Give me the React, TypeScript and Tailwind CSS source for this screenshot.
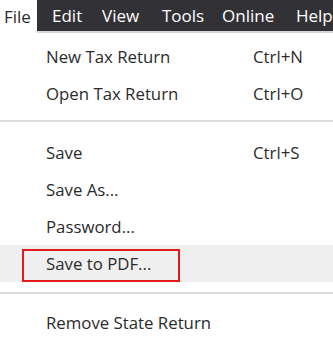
import React from 'react';

const tabs = [
  { name: 'File', w: 'w-[37px]' },
  { name: 'Edit', w: 'w-[50px]' },
  { name: 'View', w: 'w-[60px]' },
  { name: 'Tools', w: 'w-[60px]' },
  { name: 'Online', w: 'w-[74px]' },
  { name: 'Help', w: 'w-[52px]' },
];

const Row: React.FC<{ label: string; shortcut?: string; active?: boolean }> = ({ label, shortcut, active }) => (
  <div className={`relative flex items-center h-[37px] pl-[46px] ${active ? 'bg-[#efefef]' : ''}`}>
    <span className="flex-1">{label}</span>
    {shortcut && <span className="w-[80px]">{shortcut}</span>}
    {active && (
      <div className="absolute left-[22px] top-[4px] w-[158px] h-[33px] border-2 border-[#e3191c]" />
    )}
  </div>
);

const App: React.FC = () => {
  return (
    <div className="w-[333px] h-[342px] overflow-hidden bg-white text-[#2b2b2b] text-[16.8px]" style={{ fontFamily: '"Open Sans", sans-serif' }}>
      <div className="flex h-[33px] bg-[#323136] border-b-2 border-[#d6d6d6] text-[17px] text-white">
        {tabs.map((t, i) => (
          <div
            key={t.name}
            className={`flex items-center shrink-0 ${t.w} ${i === 0 ? 'bg-white text-[#2b2b2b] pl-[4px] -mb-[2px]' : 'pl-[15px]'}`}
          >
            {t.name}
          </div>
        ))}
      </div>

      <div className="pt-[5px]">
        <Row label="New Tax Return" shortcut="Ctrl+N" />
        <Row label="Open Tax Return" shortcut="Ctrl+O" />
      </div>
      <div className="mt-[8px] h-[2px] bg-[#dcdcdc]" />
      <div className="pt-[12px]">
        <Row label="Save" shortcut="Ctrl+S" />
        <Row label="Save As..." />
        <Row label="Password..." />
        <Row label="Save to PDF..." active />
      </div>
      <div className="mt-[10px] h-[2px] bg-[#dcdcdc]" />
      <div className="pt-[10px]">
        <Row label="Remove State Return" />
      </div>
    </div>
  );
};

export default App;
